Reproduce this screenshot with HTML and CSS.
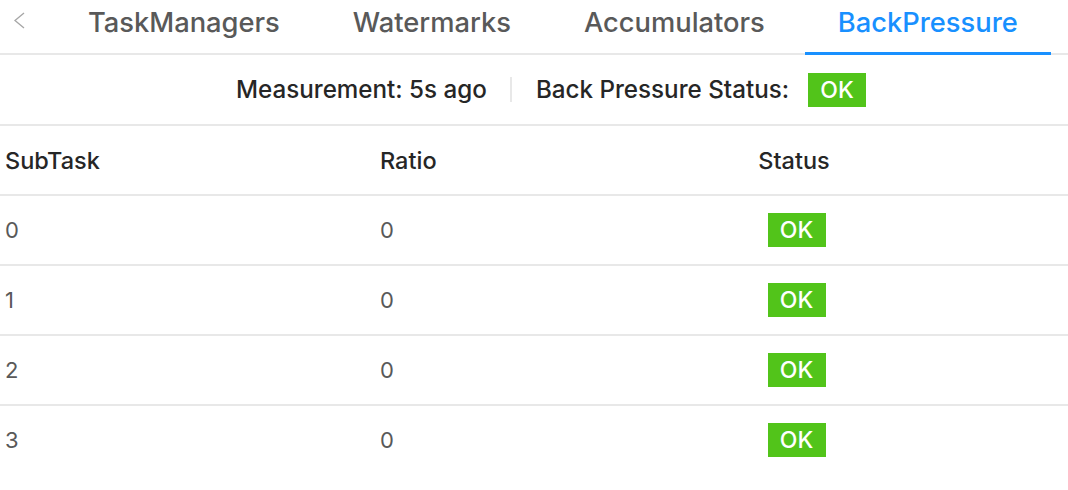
FILE: index.html
```html
<!DOCTYPE html>
<html>
<head>
<meta charset="utf-8">
<link rel="stylesheet" href="styles.css">
</head>
<body>
<div class="tabs">
  <div class="tab-prev">
    <svg width="12" height="17" viewBox="0 0 12 17"><path d="M11 1 L2 8.5 L11 16" fill="none" stroke="#a6a6a6" stroke-width="1.3"/></svg>
  </div>
  <div class="tab-list">
    <div class="tab">TaskManagers</div>
    <div class="tab">Watermarks</div>
    <div class="tab">Accumulators</div>
    <div class="tab active">BackPressure</div>
  </div>
</div>
<div class="summary">
  <span class="summary-item">Measurement: 5s ago</span>
  <span class="divider"></span>
  <span class="summary-item">Back Pressure Status:</span>
  <span class="badge big">OK</span>
</div>
<table class="grid">
  <thead>
    <tr><th class="c1">SubTask</th><th class="c2">Ratio</th><th class="c3">Status</th></tr>
  </thead>
  <tbody>
    <tr><td class="c1">0</td><td class="c2">0</td><td class="c3"><span class="badge">OK</span></td></tr>
    <tr><td class="c1">1</td><td class="c2">0</td><td class="c3"><span class="badge">OK</span></td></tr>
    <tr><td class="c1">2</td><td class="c2">0</td><td class="c3"><span class="badge">OK</span></td></tr>
    <tr><td class="c1">3</td><td class="c2">0</td><td class="c3"><span class="badge">OK</span></td></tr>
  </tbody>
</table>
</body>
</html>
```
FILE: styles.css
```css
html, body {
  margin: 0;
  padding: 0;
  background: #fff;
  font-family: Inter, "Noto Sans", "Liberation Sans", sans-serif;
}
body {
  width: 1068px;
  height: 490px;
  overflow: hidden;
}
.tabs {
  display: flex;
  align-items: stretch;
  height: 53px;
  border-bottom: 2px solid #e8e8e8;
}
.tab-prev {
  width: 55px;
  display: flex;
  align-items: flex-start;
  padding-top: 12px;
  padding-left: 13px;
  box-sizing: border-box;
}
.tab-list {
  display: flex;
  gap: 7px;
}
.tab {
  position: relative;
  padding: 0 33px;
  font-size: 27.3px;
  font-weight: 500;
  line-height: 45px;
  color: #595959;
  white-space: nowrap;
}
.tab.active {
  color: #1890ff;
}
.tab.active::after {
  content: "";
  position: absolute;
  left: 0;
  right: 0;
  bottom: -2px;
  height: 3px;
  background: #1890ff;
}
.summary {
  display: flex;
  align-items: center;
  justify-content: center;
  height: 69px;
  padding-left: 34px;
  border-bottom: 2px solid #e8e8e8;
  font-size: 24.2px;
  font-weight: 500;
  color: #262626;
}
.divider {
  width: 2px;
  height: 25px;
  background: #e8e8e8;
  margin: 0 24px 0 23px;
}
.badge {
  display: inline-block;
  background: #52c41a;
  color: #fff;
  font-size: 23px;
  font-weight: 500;
  width: 58px;
  height: 34px;
  line-height: 34px;
  text-align: center;
}
.badge.big {
  margin-left: 19px;
}
.grid {
  width: 1068px;
  border-collapse: collapse;
  font-size: 22px;
}
.grid th {
  font-size: 23.5px;
  font-weight: 500;
  color: #262626;
  height: 68px;
  border-bottom: 2px solid #e8e8e8;
  padding: 0 5px;
  text-align: left;
}
.grid td {
  color: #595959;
  height: 68px;
  border-bottom: 2px solid #e8e8e8;
  padding: 0 5px;
}
.grid tbody tr:last-child td {
  border-bottom: none;
}
.c1 { width: 365px; }
.c2 { width: 137px; }
.grid .c3 { text-align: center; padding-left: 8px; }
.grid th.c3 { padding-left: 3px; }
```
